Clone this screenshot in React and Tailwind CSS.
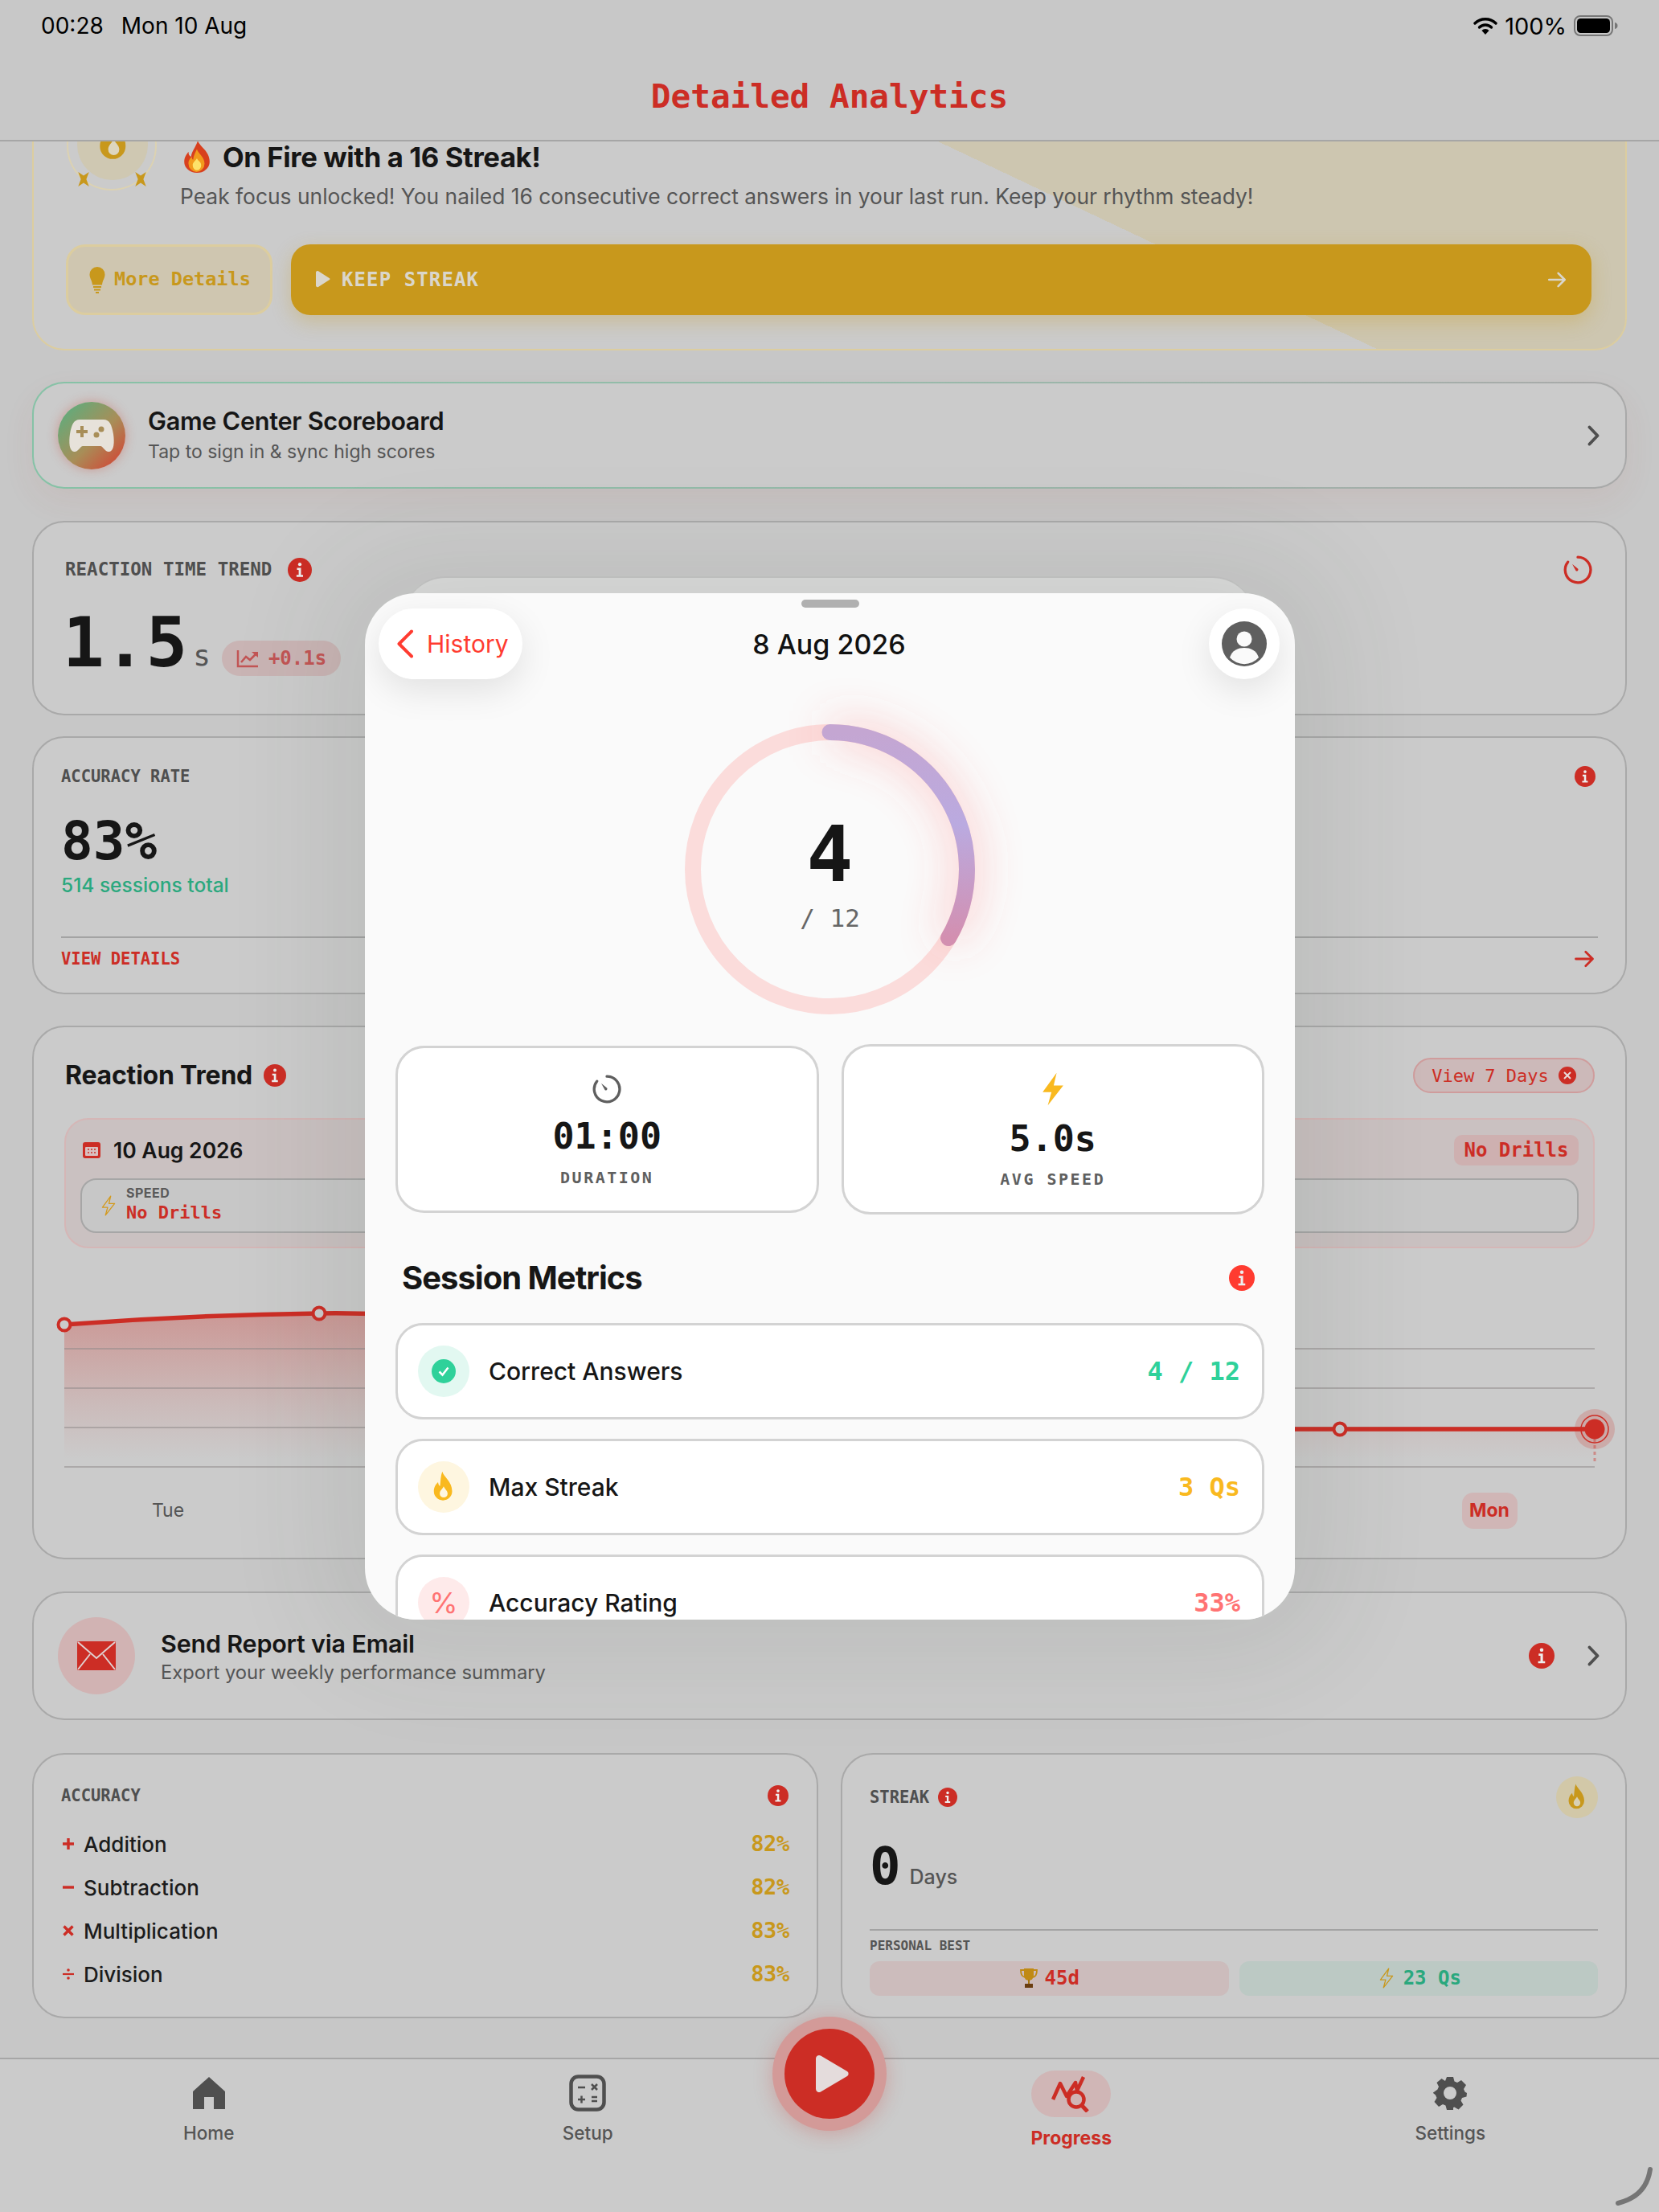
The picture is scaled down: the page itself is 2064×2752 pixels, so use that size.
import React from "react";

const M = "font-['DejaVu_Sans_Mono',monospace]";
const CARD = "rounded-[40px] border-2 border-[#a9a9a9] bg-[#cbcbcb]";

function Info({ size = 28, color = "#cc2d25" }) {
  return (
    <svg width={size} height={size} viewBox="0 0 24 24" className="shrink-0">
      <circle cx="12" cy="12" r="12" fill={color} />
      <circle cx="12" cy="6.5" r="1.7" fill="#eee" />
      <path d="M9.2 10h4v7h2v2H8.7v-2h2.2v-5H9.2z" fill="#eee" />
    </svg>
  );
}
function Flame({ size = 24, color = "#c8981c", inner = "#d8d0b4", className = "" }) {
  return (
    <svg width={size} height={size} viewBox="0 0 24 24" className={className}>
      <path d="M11 1c1 4 7 7 7 14a6.5 6.5 0 0 1-13 0c0-3 1.4-5 3-6.5.2 1.6.7 2.4 1.4 2.8C9.8 8 9.8 4 11 1z" fill={color} />
      <path d="M12 11.5c-.8 1.8-2.8 2.8-2.8 5.2a2.8 2.8 0 0 0 5.600 0c0-2.200-2-3.200-2.800-5.200z" fill={inner} />
    </svg>
  );
}
function Bolt({ size = 24, fill = "#f9b91f", stroke = "none" }) {
  return (
    <svg width={size} height={size} viewBox="0 0 24 24" className="shrink-0">
      <path d="M14.5 1 5 14h6l-2.500 9L19 9.500h-6.500z" fill={fill} stroke={stroke} strokeWidth="1.200" strokeLinejoin="round" />
    </svg>
  );
}
function Timer({ size = 40, color = "#5f5f5f", sw = 2 }) {
  return (
    <svg width={size} height={size} viewBox="0 0 24 24" fill="none" className="shrink-0">
      <path d="M12 2.500a9.500 9.500 0 1 1-7.400 3.600" stroke={color} strokeWidth={sw} strokeLinecap="round" />
      <path d="M7.800 7.600l4.400 3.600a1.200 1.200 0 0 1-1.600 1.600z" fill={color} />
    </svg>
  );
}
function Chevron({ w = 15, h = 26, color = "#4f4f4f" }) {
  return (
    <svg width={w} height={h} viewBox="0 0 15 26" fill="none" className="shrink-0">
      <path d="M2.500 2.500 12.500 13l-10 10.500" stroke={color} strokeWidth="3.800" strokeLinecap="round" strokeLinejoin="round" />
    </svg>
  );
}
function Arrow({ size = 26, color = "#d9d6cc" }) {
  return (
    <svg width={size} height={size} viewBox="0 0 24 24" fill="none" className="shrink-0">
      <path d="M3 12h18M13.500 4.500 21 12l-7.500 7.500" stroke={color} strokeWidth="2.400" strokeLinecap="round" strokeLinejoin="round" />
    </svg>
  );
}

function StatusBar() {
  return (
    <div className="flex h-[64px] items-center justify-between pl-[51px] pr-[50px] text-[28px] leading-none text-black">
      <div className="flex gap-[22px]">
        <span>00:28</span>
        <span>Mon 10 Aug</span>
      </div>
      <div className="flex items-center gap-[9px]">
        <svg width="30" height="24" viewBox="0 0 30 24" fill="none">
          <path d="M2 9c7-7 19-7 26 0" stroke="#000" strokeWidth="3.400" strokeLinecap="round" />
          <path d="M7.500 14c4-4 11-4 15 0" stroke="#000" strokeWidth="3.400" strokeLinecap="round" />
          <path d="M15 23l-4.600-5a6.500 6.500 0 0 1 9.200 0z" fill="#000" />
        </svg>
        <span className="text-[29px]">100%</span>
        <svg width="56" height="26" viewBox="0 0 56 26">
          <rect x="1" y="1" width="47" height="24" rx="7" fill="none" stroke="#777" strokeWidth="2" />
          <rect x="4" y="4" width="41" height="18" rx="4.500" fill="#000" />
          <path d="M51 9c2.500.5 3.500 2 3.500 4s-1 3.500-3.500 4z" fill="#777" />
        </svg>
      </div>
    </div>
  );
}

function Sparkle({ className }) {
  return (
    <svg width="16" height="18" viewBox="0 0 14 16" className={className}>
      <path d="M1 0 7 4l6-4-3 8 3 8-6-4-6 4 3-8z" fill="#c8981c" />
    </svg>
  );
}

function Hero() {
  return (
    <div className="mt-[-86px] h-[346px] shrink-0 rounded-[40px] border-2 border-[#dccd9f] bg-[linear-gradient(25.3deg,#cbcbcb_61.8%,#cdc6b0_61.8%)] pl-[41px] pr-[42px] pt-[33px]">
      <div className="flex h-[112px]">
        <div className="relative h-[112px] w-[112px] shrink-0 rounded-full border-2 border-[#dcd2b2]">
          <div className="absolute left-[11px] top-[9px] h-[88px] w-[88px] rounded-full bg-[#cfc8b2]" />
          <Flame size={59} className="absolute left-[27px] top-[18px]" inner="#ddd6bf" />
          <Sparkle className="absolute left-[11px] top-[87px]" />
          <Sparkle className="absolute left-[82px] top-[87px]" />
        </div>
        <div className="ml-[29px] pt-[52px]">
          <div className="flex h-[36px] items-center">
            <svg width="36" height="40" viewBox="0 0 34 38" className="ml-[3px] mr-[14px]">
              <path d="M18 0c2 7 14 12 14 25a15 13 0 0 1-30 0c0-6 3-9 5-12 0 3 1 5 3 6 1-7 6-12 8-19z" fill="#d8401e" />
              <path d="M17 10c1 5 9 9 9 17a9.500 10 0 0 1-19 0c0-4 2-6 4-8 0 2 .5 3 1.500 3.500C13 18 15 14 17 10z" fill="#f29a1c" />
              <path d="M17 21c1 3 5 4 5 8a5 6 0 0 1-10 0c0-3 3-5 5-8z" fill="#fde36a" />
            </svg>
            <span className="text-[34.700px] font-bold leading-[36px] tracking-[-0.4px] text-[#161616]">On Fire with a 16 Streak!</span>
          </div>
          <div className="mt-[11px] whitespace-nowrap text-[26.400px] leading-[40px] text-[#555]">
            Peak focus unlocked! You nailed 16 consecutive correct answers in your last run. Keep your rhythm steady!
          </div>
        </div>
      </div>
      <div className="mt-[67px] flex h-[88px] gap-[23px]">
        <div className="-ml-[1px] flex w-[257px] shrink-0 items-center gap-[10px] rounded-[24px] border-[3px] border-[#dccd9f] bg-[#cfc6b0] pl-[25px]">
          <svg width="22" height="34" viewBox="0 0 22 34">
            <path d="M11 1a9.500 9.500 0 0 1 9.500 9.500c0 5-3 7-3.500 13H5c-.5-6-3.500-8-3.500-13A9.500 9.500 0 0 1 11 1z" fill="#c8981c" />
            <path d="M6 26h10M7 29.500h8M9 33h4" stroke="#c8981c" strokeWidth="2" />
          </svg>
          <span className={`${M} text-[23.500px] font-bold text-[#c8981c]`}>More Details</span>
        </div>
        <div className="flex flex-1 items-center justify-between rounded-[24px] bg-[#c8981c] pl-[30px] pr-[30px] shadow-[0_8px_24px_rgba(200,152,28,0.3)]">
          <div className="flex items-center gap-[13px]">
            <svg width="20" height="24" viewBox="0 0 20 24">
              <path d="M1 3a2 2 0 0 1 3-1.700l14 9a1 1 0 0 1 0 1.600l-14 9A2 2 0 0 1 1 19z" fill="#dad6cb" />
            </svg>
            <span className={`${M} text-[24px] font-bold tracking-[1.100px] text-[#dad6cb]`}>KEEP STREAK</span>
          </div>
          <Arrow />
        </div>
      </div>
    </div>
  );
}

function GameCenter() {
  return (
    <div className="mt-[39px] flex h-[133px] shrink-0 items-center rounded-[40px] border-2 border-transparent pl-[30px] pr-[32px] shadow-[0_16px_40px_rgba(190,70,50,0.07)] [background:linear-gradient(#cbcbcb,#cbcbcb)_padding-box,linear-gradient(90deg,#86c2a6_0%,#98b9aa_55%,#a9a9a9_100%)_border-box]">
      <div className="flex h-[84px] w-[84px] shrink-0 items-center justify-center rounded-full bg-[linear-gradient(135deg,#69a878_15%,#a88e58_55%,#cf4c38_90%)] shadow-[0_0_14px_rgba(200,60,40,0.35)]">
        <svg width="58" height="42" viewBox="0 0 58 42">
          <path d="M14 1h30c7 0 10 6 12 18 1.500 10 1 21-5 22-5 1-8-7-11-7H18c-3 0-6 8-11 7C1 40 .5 29 2 19 4 7 7 1 14 1z" fill="#e7e2da" />
          <path d="M17 9v14M10 16h14" stroke="#a88e58" strokeWidth="4" />
          <circle cx="41" cy="13" r="3.500" fill="#a88e58" />
          <circle cx="35" cy="20" r="3.500" fill="#a88e58" />
        </svg>
      </div>
      <div className="ml-[28px] flex-1">
        <div className="text-[30.700px] font-semibold leading-[40px] tracking-[-0.3px] text-[#161616]">Game Center Scoreboard</div>
        <div className="mt-[1px] text-[23px] leading-[34px] text-[#555]">Tap to sign in &amp; sync high scores</div>
      </div>
      <Chevron />
    </div>
  );
}

function ReactionTime() {
  return (
    <div className={`${CARD} mt-[40px] h-[242px] shrink-0 pl-[39px] pr-[39px] pt-[43px]`}>
      <div className="flex h-[32px] items-center justify-between">
        <div className="flex items-center gap-[20px]">
          <span className={`${M} text-[22.500px] font-bold text-[#4f4f4f]`}>REACTION TIME TREND</span>
          <Info size={30} />
        </div>
        <Timer color="#cc2d25" />
      </div>
      <div className="mt-[31px] flex items-start">
        <span className={`${M} -ml-[3px] text-[86px] font-bold leading-[86px] text-[#161616]`}>1.5</span>
        <span className={`${M} ml-[7px] mt-[42px] text-[36px] leading-[36px] text-[#555]`}>s</span>
        <div className="ml-[14px] mt-[41px] flex h-[44px] w-[148px] items-center justify-center gap-[12px] rounded-full bg-[#c9b4b4]">
          <svg width="28" height="24" viewBox="0 0 28 24" fill="none">
            <path d="M2 2v20h25" stroke="#c25555" strokeWidth="2.500" />
            <path d="M6 17l6-7 5 4 8-8" stroke="#c25555" strokeWidth="2.500" />
            <path d="M19 4h8v7z" fill="#c25555" />
          </svg>
          <span className={`${M} text-[24px] font-bold text-[#c25555]`}>+0.1s</span>
        </div>
      </div>
    </div>
  );
}

function AccuracyRate() {
  return (
    <div className={`${CARD} mt-[26px] h-[321px] shrink-0 px-[34px] pt-[34px]`}>
      <div className="flex h-[28px] items-center justify-between pr-[3px]">
        <span className={`${M} text-[20.500px] font-bold text-[#4f4f4f]`}>ACCURACY RATE</span>
        <Info size={26} />
      </div>
      <div className={`${M} mt-[34px] text-[66px] font-bold leading-[66px] text-[#161616]`}>83%</div>
      <div className="mt-[6px] text-[24.500px] font-medium leading-[30px] text-[#2aa87e]">514 sessions total</div>
      <div className="mt-[49px] h-[2px] bg-[#a3a3a3]" />
      <div className="mt-[13px] flex h-[26px] items-center justify-between pr-[3px]">
        <span className={`${M} text-[20.500px] font-bold text-[#cc2d25]`}>VIEW DETAILS</span>
        <Arrow size={28} color="#cc2d25" />
      </div>
    </div>
  );
}

function Chart() {
  return (
    <svg width="1904" height="240" viewBox="0 0 1904 240" fill="none" className="mt-[47px] block overflow-visible">
      <defs>
        <linearGradient id="area" gradientUnits="userSpaceOnUse" x1="0" y1="34" x2="0" y2="225">
          <stop offset="0" stopColor="#cc2d25" stopOpacity="0.32" />
          <stop offset="0.6" stopColor="#cc2d25" stopOpacity="0.1" />
          <stop offset="0.95" stopColor="#cc2d25" stopOpacity="0" />
        </linearGradient>
      </defs>
      <path d="M0 48Q160 36 317 34T640 60L1270 178H1904V225H0z" fill="url(#area)" />
      {[78, 127, 176, 225].map((y) => (
        <path key={y} d={`M0 ${y}H1904`} stroke="#8e8888" strokeWidth="1.200" />
      ))}
      <path d="M0 48Q160 36 317 34T640 60L1270 178H1904" stroke="#cc2d25" strokeWidth="5.500" />
      <circle cx="0" cy="48" r="7.500" fill="#cbcbcb" stroke="#cc2d25" strokeWidth="4" />
      <circle cx="317" cy="34" r="7.500" fill="#cbcbcb" stroke="#cc2d25" strokeWidth="4" />
      <circle cx="1587" cy="178" r="7.500" fill="#cbcbcb" stroke="#cc2d25" strokeWidth="4" />
      <path d="M1904 182V220" stroke="#cc2d25" strokeOpacity="0.4" strokeWidth="3" strokeDasharray="4 4" />
      <circle cx="1904" cy="178" r="25" fill="#cc2d25" fillOpacity="0.2" />
      <circle cx="1904" cy="178" r="17" stroke="#cc2d25" strokeWidth="1.500" />
      <circle cx="1904" cy="178" r="12.500" fill="#cc2d25" />
    </svg>
  );
}

function ReactionTrend() {
  return (
    <div className={`${CARD} mt-[39px] h-[664px] shrink-0 px-[38px] pt-[38px]`}>
      <div className="flex h-[44px] items-center justify-between">
        <div className="flex items-center gap-[14px] pl-[1px]">
          <span className="text-[32px] font-bold leading-[44px] tracking-[-0.2px] text-[#161616]">Reaction Trend</span>
          <Info size={28} />
        </div>
        <div className="flex h-[44px] w-[226px] items-center justify-center gap-[12px] rounded-full border-2 border-[#cf9c9c] bg-[#ccb9b9]">
          <span className={`${M} whitespace-nowrap text-[22px] text-[#cc2d25]`}>View 7 Days</span>
          <svg width="22" height="22" viewBox="0 0 22 22" fill="none">
            <circle cx="11" cy="11" r="11" fill="#cc2d25" />
            <path d="M7 7l8 8M15 7l-8 8" stroke="#e8dcdc" strokeWidth="2" />
          </svg>
        </div>
      </div>
      <div className="mt-[31px] h-[162px] rounded-[30px] border-2 border-[#d5b6b6] bg-[#cac1c1] px-[18px] pt-[19px]">
        <div className="flex h-[38px] items-center justify-between">
          <div className="flex items-center gap-[16px] pl-[3px]">
            <svg width="22" height="20" viewBox="0 0 22 20">
              <rect width="22" height="20" rx="3" fill="#cc2d25" />
              <rect x="3" y="6" width="16" height="11" rx="1" fill="#d9c0c0" />
              <path d="M6 9h2M10 9h2M14 9h2M6 13h2M10 13h2M14 13h2" stroke="#cc2d25" strokeWidth="1.500" />
            </svg>
            <span className="pt-[2px] text-[26.500px] font-semibold text-[#161616]">10 Aug 2026</span>
          </div>
          <div className={`${M} flex h-[38px] w-[155px] items-center justify-center rounded-[10px] bg-[#ceb0b0] text-[24px] font-bold text-[#cc2d25]`}>No Drills</div>
        </div>
        <div className="mt-[16px] flex h-[68px] items-center gap-[9px] rounded-[20px] border-2 border-[#a6a6a6] bg-[#c7c7c7] pl-[20px]">
          <Bolt size={26} fill="none" stroke="#d39a1e" />
          <div>
            <div className="text-[16px] font-bold leading-[18px] tracking-[0.5px] text-[#5a5a5a]">SPEED</div>
            <div className={`${M} text-[22px] font-bold leading-[32px] text-[#cc2d25]`}>No Drills</div>
          </div>
        </div>
      </div>
      <Chart />
      <div className="-ml-[8px] mt-[17px] grid w-[1918px] grid-cols-7 text-center text-[23px] text-[#555]">
        {["Tue", "Wed", "Thu", "Fri", "Sat", "Sun"].map((d) => (
          <div key={d} className="flex h-[45px] items-center justify-center">{d}</div>
        ))}
        <div className="flex h-[45px] items-center justify-center">
          <span className="flex h-[45px] w-[69px] items-center justify-center rounded-[14px] bg-[#d0b6b6] font-bold text-[#cc2d25]">Mon</span>
        </div>
      </div>
    </div>
  );
}

function SendReport() {
  return (
    <div className={`${CARD} mt-[40px] flex h-[160px] shrink-0 items-center pl-[30px] pr-[32px]`}>
      <div className="flex h-[96px] w-[96px] shrink-0 items-center justify-center rounded-full bg-[#d1b3b3]">
        <svg width="48" height="36" viewBox="0 0 48 36" fill="none">
          <rect width="48" height="36" rx="1.500" fill="#cc2d25" />
          <path d="M1 1l23 20L47 1M1 35l15-19M47 35 32 16" stroke="#e0d0d0" strokeWidth="2" />
        </svg>
      </div>
      <div className="ml-[32px] flex-1 pt-[3px]">
        <div className="text-[30.500px] font-semibold leading-[40px] tracking-[-0.2px] text-[#161616]">Send Report via Email</div>
        <div className="mt-[-2px] text-[23.800px] leading-[36px] text-[#555]">Export your weekly performance summary</div>
      </div>
      <Info size={32} />
      <div className="ml-[41px]">
        <Chevron />
      </div>
    </div>
  );
}

const OPS = [
  { name: "Addition", val: "82%", d: "M8 1v14M1 8h14", dots: false },
  { name: "Subtraction", val: "82%", d: "M1 8h14", dots: false },
  { name: "Multiplication", val: "83%", d: "M2.500 2.500l11 11M13.500 2.500l-11 11", dots: false },
  { name: "Division", val: "83%", d: "M1 8h14", dots: true },
];

function BottomCards() {
  return (
    <div className="mt-[41px] grid h-[330px] shrink-0 grid-cols-2 gap-[28px]">
      <div className={`${CARD} px-[34px] pt-[37px]`}>
        <div className="flex h-[28px] items-center justify-between pr-[1px]">
          <span className={`${M} text-[20.500px] font-bold text-[#4f4f4f]`}>ACCURACY</span>
          <Info size={26} />
        </div>
        <div className="mt-[19px]">
          {OPS.map((o) => (
            <div key={o.name} className="flex h-[54px] items-center justify-between">
              <div className="flex items-center gap-[11px] pl-[1px]">
                <svg width="16" height="16" viewBox="0 0 16 16" fill="none">
                  <path d={o.d} stroke="#cc2d25" strokeWidth={o.dots ? 2.2 : 3.4} />
                  {o.dots ? <circle cx="8" cy="3" r="1.800" fill="#cc2d25" /> : null}
                  {o.dots ? <circle cx="8" cy="13" r="1.800" fill="#cc2d25" /> : null}
                </svg>
                <span className="text-[26px] font-medium text-[#1c1c1c]">{o.name}</span>
              </div>
              <span className={`${M} text-[27px] font-bold tracking-[-0.300px] text-[#c8981c]`}>{o.val}</span>
            </div>
          ))}
        </div>
      </div>
      <div className={`${CARD} px-[34px] pt-[27px]`}>
        <div className="flex h-[52px] items-center justify-between">
          <div className="flex items-center gap-[11px]">
            <span className={`${M} text-[20.500px] font-bold text-[#4f4f4f]`}>STREAK</span>
            <Info size={24} />
          </div>
          <div className="flex h-[52px] w-[52px] items-center justify-center rounded-full bg-[#d2c8a8]">
            <Flame size={36} />
          </div>
        </div>
        <div className="mt-[28px] flex items-baseline gap-[11px]">
          <span className={`${M} text-[64px] font-bold leading-[64px] text-[#161616]`}>0</span>
          <span className="text-[25px] font-medium text-[#555]">Days</span>
        </div>
        <div className="mt-[45px] h-[2px] bg-[#a3a3a3]" />
        <div className={`${M} mt-[9px] text-[16px] font-bold leading-[20px] text-[#555]`}>PERSONAL BEST</div>
        <div className="mt-[9px] grid h-[43px] grid-cols-2 gap-[13px]">
          <div className="flex items-center justify-center gap-[8px] rounded-[12px] bg-[#ccbcbc]">
            <svg width="24" height="26" viewBox="0 0 24 26" fill="none">
              <path d="M6 1h12v9a6 6 0 0 1-12 0z" fill="#c08a14" />
              <path d="M6 3H2c0 5 1 8 5 9M18 3h4c0 5-1 8-5 9" stroke="#c08a14" strokeWidth="1.800" />
              <path d="M11 15h2v5h-2z" fill="#a8760f" />
              <path d="M7 20h10v5H7z" fill="#6a3d10" />
            </svg>
            <span className={`${M} text-[24px] font-bold text-[#cc2d25]`}>45d</span>
          </div>
          <div className="flex items-center justify-center gap-[8px] rounded-[12px] bg-[#bcc9c4]">
            <Bolt size={26} fill="none" stroke="#c8981c" />
            <span className={`${M} text-[24px] font-bold text-[#2aa87e]`}>23 Qs</span>
          </div>
        </div>
      </div>
    </div>
  );
}

function Tab({ label, children, active }) {
  return (
    <div className="flex flex-1 flex-col items-center">
      <div className={active ? "flex h-[58px] w-[99px] items-center justify-center rounded-[29px] bg-[#d0b6b6]" : "flex h-[56px] items-center justify-center"}>
        {children}
      </div>
      <div className={active ? "mt-[11px] text-[23px] font-bold leading-[30px] text-[#cc2d25]" : "mt-[7px] text-[22.500px] font-medium leading-[30px] text-[#555]"}>{label}</div>
    </div>
  );
}

function TabBar() {
  return (
    <div className="relative z-10 h-[192px] shrink-0 border-t-2 border-[#a6a6a6] bg-[#cbcbcb] px-[24px] pt-[14px]">
      <div className="flex">
        <Tab label="Home">
          <svg width="42" height="42" viewBox="0 0 42 42">
            <path fillRule="evenodd" d="M21 1 41 19v22H27V26H15v15H1V19z" fill="#4f4f4f" />
          </svg>
        </Tab>
        <Tab label="Setup">
          <svg width="46" height="46" viewBox="0 0 46 46" fill="none">
            <rect x="2.500" y="2.500" width="41" height="41" rx="9" stroke="#4f4f4f" strokeWidth="4.500" />
            <path d="M11 16h9M28 12l7 7M35 12l-7 7M11 31h9M15.500 26.500v9M28 28h7M28 33h7" stroke="#4f4f4f" strokeWidth="2.500" />
          </svg>
        </Tab>
        <div className="w-[130px] shrink-0" />
        <Tab label="Progress" active>
          <svg width="50" height="46" viewBox="0 0 50 46" fill="none">
            <path d="M2 30 11 10l8 16L30 9l2 10 8-17" stroke="#cc2d25" strokeWidth="4.500" strokeLinejoin="round" />
            <circle cx="31" cy="30" r="9.500" stroke="#cc2d25" strokeWidth="4.500" />
            <path d="M37.500 37 45 45" stroke="#cc2d25" strokeWidth="5" />
          </svg>
        </Tab>
        <Tab label="Settings">
          <svg width="42" height="42" viewBox="0 0 42 42">
            <path fillRule="evenodd" d="M17 1h8l1.500 5.500 3.500 1.500 5-3 6 6-3 5 1.500 3.500L42 21v0l-.500 4.500L36 27l-1.500 3.500 3 5-6 6-5-3-1.500.5L25 42h-8l-1.500-5.500L12 35l-5 3-5.500-6 3-5L3 23.500 0 21l0-.5 5.500-4L7 13 4.500 8l6-5L15 6z M21 13a8 8 0 1 0 0 16 8 8 0 0 0 0-16z" fill="#4f4f4f" />
          </svg>
        </Tab>
      </div>
      <div className="absolute left-[961px] top-[-53px] flex h-[142px] w-[142px] items-center justify-center rounded-full bg-[#d39a98] shadow-[0_4px_24px_rgba(204,45,37,0.25)]">
        <div className="flex h-[112px] w-[112px] items-center justify-center rounded-full bg-[#cc2d25]">
          <svg width="44" height="48" viewBox="0 0 44 48" className="ml-[6px]">
            <path d="M2 5a4 4 0 0 1 6-3.400l33 19.500a3.400 3.400 0 0 1 0 5.800L8 46.400A4 4 0 0 1 2 43z" fill="#e4dcdc" />
          </svg>
        </div>
      </div>
      <svg width="48" height="48" viewBox="0 0 48 48" fill="none" className="absolute bottom-[8px] right-[8px]">
        <path d="M45 3c-3 20-15 36-40 42" stroke="#757575" strokeWidth="6" strokeLinecap="round" />
      </svg>
    </div>
  );
}

function Ring() {
  return (
    <div className="relative mx-auto mt-[56px] h-[361px] w-[361px]">
      <svg width="361" height="361" viewBox="0 0 361 361" fill="none" className="block overflow-visible">
        <defs>
          <linearGradient id="ringG" x1="0" y1="0" x2="0" y2="1">
            <stop offset="0" stopColor="#c4a6d2" />
            <stop offset="0.45" stopColor="#baaae0" />
            <stop offset="1" stopColor="#d38fb0" />
          </linearGradient>
          <filter id="glow" x="-60%" y="-60%" width="220%" height="220%">
            <feGaussianBlur stdDeviation="26" />
          </filter>
        </defs>
        <circle cx="180.500" cy="180.500" r="170.500" stroke="#fbdcdb" strokeWidth="20" />
        <path d="M180.500 10A170.500 170.500 0 0 1 328 266" stroke="#ff5a5a" strokeOpacity="0.32" strokeWidth="28" filter="url(#glow)" />
        <path d="M180.500 10A170.500 170.500 0 0 1 328 266" stroke="url(#ringG)" strokeWidth="20" strokeLinecap="round" />
      </svg>
      <div className="absolute inset-0 flex flex-col items-center pt-[114px]">
        <div className={`${M} text-[96px] font-bold leading-[96px] text-[#161616]`}>4</div>
        <div className={`${M} mt-[13px] text-[31px] leading-[36px] text-[#666]`}>/ 12</div>
      </div>
    </div>
  );
}

function MetricRow({ label, value, valueClass, circle, icon }) {
  return (
    <div className="flex h-[120px] shrink-0 items-center rounded-[34px] border-[3px] border-[#d3d3d3] bg-white pl-[25px] pr-[27px]">
      <div className={`flex h-[64px] w-[64px] shrink-0 items-center justify-center rounded-full ${circle}`}>{icon}</div>
      <div className="ml-[24px] flex-1 text-[30px] font-medium text-[#161616]">{label}</div>
      <div className={`${M} text-[32px] font-bold ${valueClass}`}>{value}</div>
    </div>
  );
}

function Modal() {
  return (
    <>
      <div className="absolute left-[504px] top-[717px] z-20 h-[60px] w-[1055px] rounded-t-[50px] border-t-2 border-[#c6c6c6] bg-[#dcdcdc]" />
      <div className="absolute left-[454px] top-[738px] z-20 h-[1277px] w-[1157px] overflow-hidden rounded-[64px] bg-[#fafafa] shadow-[0_0_130px_50px_rgba(60,70,60,0.09)]">
        <div className="mx-auto mt-[8px] h-[10px] w-[72px] rounded-full bg-[#b0b0b0]" />
        <div className="mt-[1px] grid h-[88px] grid-cols-[1fr_auto_1fr] items-center pl-[17px] pr-[19px]">
          <div className="flex h-[88px] w-[179px] items-center gap-[16px] rounded-[44px] bg-white pl-[22px] shadow-[0_14px_44px_rgba(0,0,0,0.1)]">
            <svg width="22" height="36" viewBox="0 0 22 36" fill="none">
              <path d="M19 2.500 3.500 18 19 33.500" stroke="#ff3b30" strokeWidth="4" strokeLinecap="round" strokeLinejoin="round" />
            </svg>
            <span className="text-[30px] leading-none text-[#ff3b30]">History</span>
          </div>
          <div className="text-[34px] font-medium text-[#111]">8 Aug 2026</div>
          <div className="flex h-[88px] w-[88px] items-center justify-center justify-self-end rounded-full bg-white shadow-[0_14px_44px_rgba(0,0,0,0.1)]">
            <svg width="56" height="56" viewBox="0 0 56 56">
              <circle cx="28" cy="28" r="28" fill="#5f5f5f" />
              <circle cx="28" cy="22" r="9.500" fill="#fafafa" />
              <path d="M10 45c3-9 10-12 18-12s15 3 18 12a24 24 0 0 1-36 0z" fill="#fafafa" />
            </svg>
          </div>
        </div>
        <Ring />
        <div className="mt-[37px] grid grid-cols-2 items-center gap-[28px] px-[38px]">
          <div className="flex h-[208px] flex-col items-center rounded-[36px] border-[3px] border-[#d3d3d3] bg-white pt-[31px]">
            <Timer />
            <div className={`${M} mt-[14px] text-[45px] font-bold leading-[50px] text-[#161616]`}>01:00</div>
            <div className={`${M} mt-[13px] text-[20px] font-bold leading-[26px] tracking-[2.500px] text-[#5f5f5f]`}>DURATION</div>
          </div>
          <div className="flex h-[212px] flex-col items-center rounded-[36px] border-[3px] border-[#d3d3d3] bg-white pt-[31px]">
            <Bolt size={44} />
            <div className={`${M} mt-[15px] text-[45px] font-bold leading-[50px] text-[#161616]`}>5.0s</div>
            <div className={`${M} mt-[12px] whitespace-nowrap text-[20px] font-bold leading-[26px] tracking-[2.500px] text-[#5f5f5f]`}>AVG SPEED</div>
          </div>
        </div>
        <div className="mt-[54px] flex h-[50px] items-center justify-between pl-[46px] pr-[50px]">
          <span className="text-[40px] font-bold leading-[50px] tracking-[-1px] text-[#161616]">Session Metrics</span>
          <Info size={32} color="#ff3b30" />
        </div>
        <div className="mt-[31px] flex flex-col gap-[24px] px-[38px]">
          <MetricRow
            label="Correct Answers"
            value="4 / 12"
            valueClass="text-[#2fd19a]"
            circle="bg-[#e2f8f1]"
            icon={
              <svg width="30" height="30" viewBox="0 0 30 30" fill="none">
                <circle cx="15" cy="15" r="15" fill="#2fd19a" />
                <path d="M9.500 15.500l4 4 7-9" stroke="#fff" strokeWidth="2.500" />
              </svg>
            }
          />
          <MetricRow
            label="Max Streak"
            value="3 Qs"
            valueClass="text-[#f9b91f]"
            circle="bg-[#fef6e0]"
            icon={<Flame size={42} color="#f9b91f" inner="#fef6e0" />}
          />
          <MetricRow
            label="Accuracy Rating"
            value="33%"
            valueClass="text-[#ff7373]"
            circle="bg-[#feeaea]"
            icon={<span className="text-[36px] leading-none text-[#ff7373]">%</span>}
          />
        </div>
      </div>
    </>
  );
}

export default function App() {
  return (
    <div className="relative flex h-[2752px] w-[2064px] flex-col overflow-hidden bg-[#c7c7c7] font-['Inter',sans-serif]">
      <div className="relative z-10 h-[176px] shrink-0 border-b-2 border-[#a6a6a6] bg-[#c8c8c8]">
        <StatusBar />
        <div className={`${M} flex h-[110px] items-center justify-center pt-[2px] text-[41px] font-bold leading-none text-[#cc2d25]`}>Detailed Analytics</div>
      </div>
      <div className="flex flex-1 flex-col overflow-hidden px-[40px]">
        <Hero />
        <GameCenter />
        <ReactionTime />
        <AccuracyRate />
        <ReactionTrend />
        <SendReport />
        <BottomCards />
      </div>
      <TabBar />
      <Modal />
    </div>
  );
}
